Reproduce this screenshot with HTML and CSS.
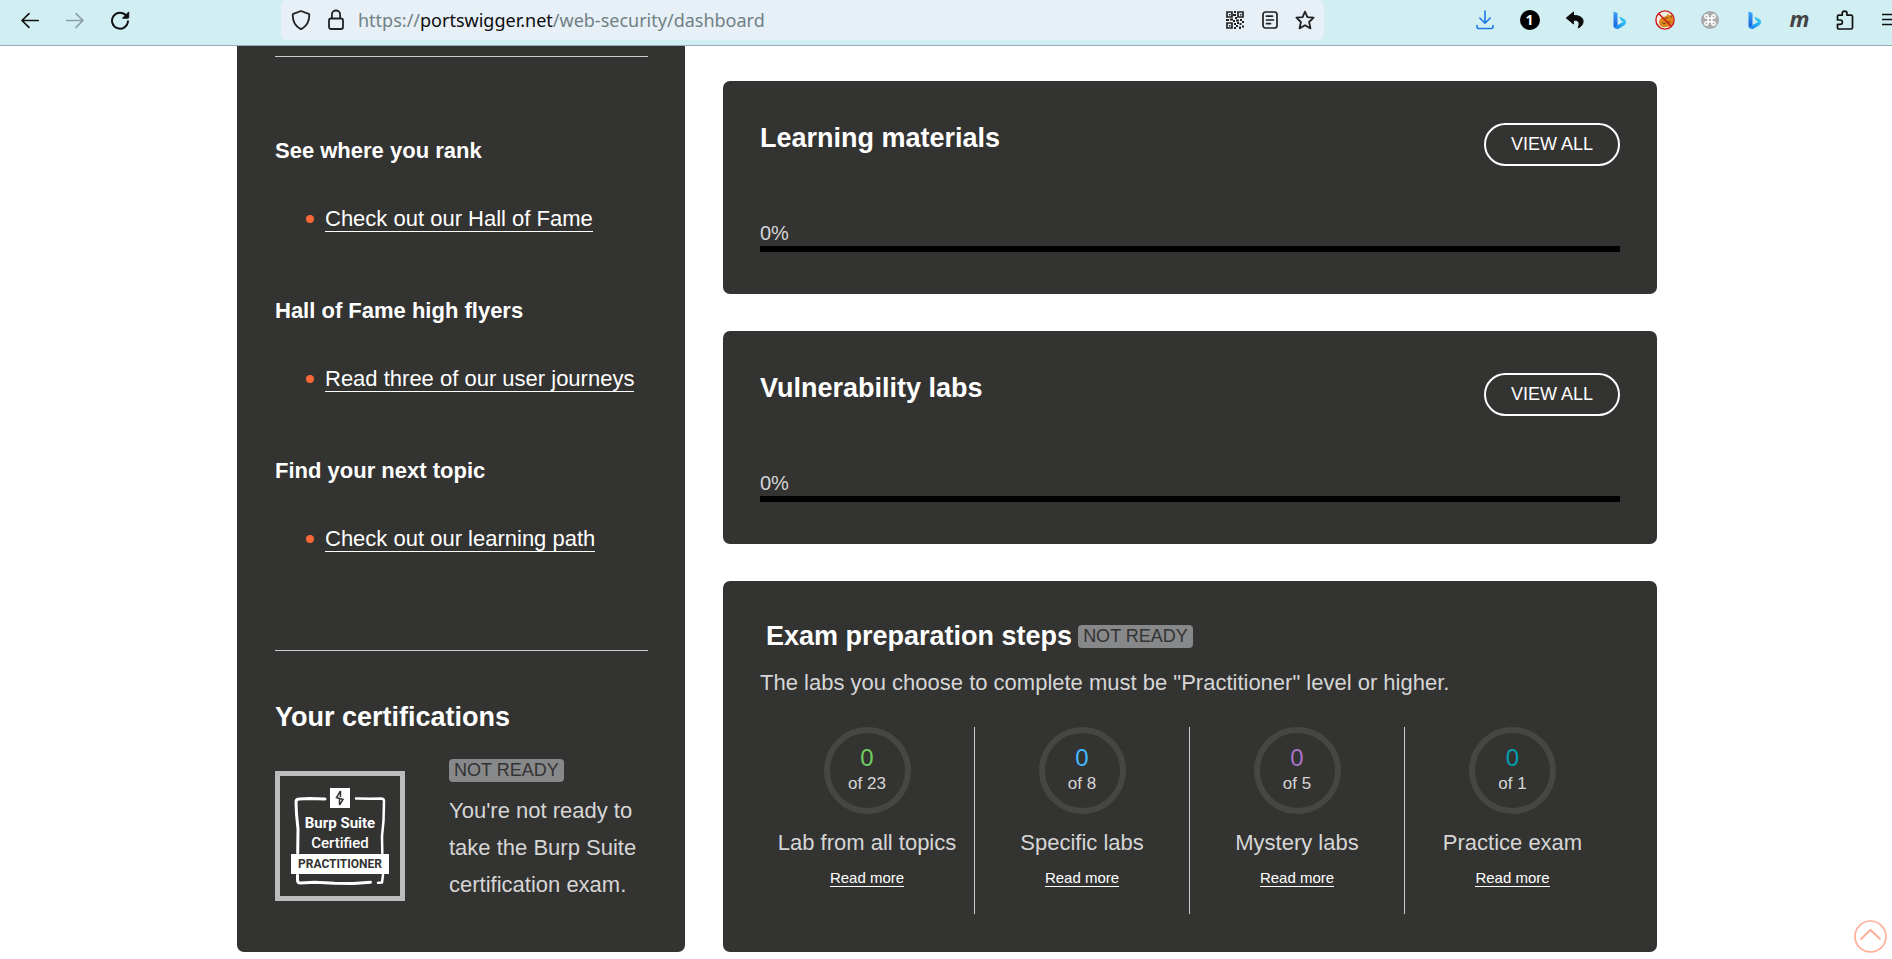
FILE: index.html
```html
<!DOCTYPE html>
<html lang="en">
<head>
<meta charset="utf-8">
<title>Dashboard | Web Security Academy</title>
<link rel="stylesheet" href="styles.css">
</head>
<body>
<svg class="defs" aria-hidden="true">
  <defs>
    <linearGradient id="bing-stem" x1="0" y1="0" x2="0" y2="1"><stop offset="0" stop-color="#3aa6f8"/><stop offset="1" stop-color="#1557dc"/></linearGradient>
    <linearGradient id="bing-leaf" x1="0" y1="1" x2="1" y2="0"><stop offset="0" stop-color="#1a7cf0"/><stop offset="1" stop-color="#35d8f5"/></linearGradient>
    <symbol id="bing" viewBox="0 0 20 20">
      <path d="M3.500 1.500l4 1.500v12.500l-2 3.200-2-2z" fill="url(#bing-stem)"/>
      <path d="M9.300 6.500l1.700 4 2.500 1.200L6 16l-2 .6 2.300 2.200c.7.400 1.500.400 2.300-.1l5.700-3.500c2.500-1.700 2.300-5-.2-6.300z" fill="url(#bing-leaf)"/>
    </symbol>
  </defs>
</svg>

<header class="toolbar">
  <nav class="nav-buttons" aria-label="Navigation">
    <button class="tool" type="button" aria-label="Back"><svg width="20" height="20" viewBox="0 0 20 20" fill="none" stroke="#111" stroke-width="1.700" stroke-linecap="round" stroke-linejoin="round"><path d="M18.200 10.500H2.200M9 3.700L2 10.500l7 6.800"/></svg></button>
    <button class="tool" type="button" aria-label="Forward" disabled><svg width="20" height="20" viewBox="0 0 20 20" fill="none" stroke="#8aa0a6" stroke-width="1.700" stroke-linecap="round" stroke-linejoin="round"><path d="M1.800 10.500h16M11 3.700l7 6.800-7 6.800"/></svg></button>
    <button class="tool" type="button" aria-label="Reload"><svg width="20" height="20" viewBox="0 0 20 20"><path d="M16.200 5.600A8 8 0 1 0 18 11.200" fill="none" stroke="#111" stroke-width="1.900" stroke-linecap="round"/><path d="M18.700 1.900v5.600c0 .4-.3.700-.7.700h-5.500z" fill="#111" stroke="#111" stroke-linejoin="round"/></svg></button>
  </nav>
  <div class="address">
    <button class="field-icon" type="button" aria-label="Tracking protection"><svg width="20" height="22" viewBox="0 0 20 22" fill="none" stroke="#222" stroke-width="1.800" stroke-linejoin="round"><path d="M10 2L2.300 4.900c-.4.200-.6.500-.6.900 0 6.300 2.800 11.500 7.700 14.100.4.200.8.200 1.200 0 4.900-2.600 7.700-7.800 7.700-14.100 0-.4-.2-.7-.6-.9z"/></svg></button>
    <button class="field-icon" type="button" aria-label="Connection secure"><svg width="20" height="22" viewBox="0 0 20 22" fill="none" stroke="#222" stroke-width="1.800"><rect x="3" y="9.500" width="14" height="10.500" rx="2"/><path d="M5.900 9.500V5.600a4.100 4.100 0 0 1 8.200 0v3.900"/></svg></button>
    <div class="url" role="textbox" aria-label="Address">https://<span class="url-host">portswigger.net</span>/web-security/dashboard</div>
    <div class="field-actions">
      <button class="field-icon" type="button" aria-label="QR code"><svg width="20" height="20" viewBox="0 0 20 20"><g fill="none" stroke="#222" stroke-width="1.700"><path d="M2 2h5v5H2zM13 2h5v5h-5zM2 13h5v5H2z"/></g><path fill="#222" d="M4 4h1.500v1.500H4zM15 4h1.500v1.500H15zM4 15h1.500v1.500H4zM9 1h2v2H9zM8 4h3v2H8zM10 7h2v2h-2zM1 9h3v2H1zM5 8.500h3v2H5zM8 10h2v2H8zM11 9.500h3v2h-3zM15 9h2v2h-2zM17 11h2v2h-2zM9 13h2v2H9zM12 12h2v2h-2zM14.500 13h2v2h-2zM11 15h2v2h-2zM17 15.500h2v2h-2zM14 16.500h2V19h-2zM9 17h2v2H9z"/></svg></button>
      <button class="field-icon" type="button" aria-label="Reader view"><svg width="20" height="20" viewBox="0 0 20 20" fill="none" stroke="#222" stroke-width="1.700" stroke-linecap="round"><rect x="3" y="2" width="14" height="16" rx="2.500"/><path d="M6.500 6.200h6M6.500 10h7M6.500 13.700h4"/></svg></button>
      <button class="field-icon" type="button" aria-label="Bookmark"><svg width="22" height="20" viewBox="0 0 22 20" fill="none" stroke="#222" stroke-width="1.800" stroke-linejoin="round"><path d="M11 1.600l2.400 5.500 6.200.6-4.500 4.300 1.400 6.400-5.500-3.200-5.500 3.200L6.900 12 2.400 7.700l6.200-.6z"/></svg></button>
    </div>
  </div>
  <div class="extensions">
    <button class="tool" type="button" aria-label="Downloads"><svg width="20" height="20" viewBox="0 0 20 20" fill="none" stroke="#1f7ae8" stroke-width="1.600" stroke-linecap="round" stroke-linejoin="round"><path d="M10 1v12M4.800 8l5.200 5.200L15.200 8M2 15.500V17c0 1 .7 1.500 1.500 1.500h13c.8 0 1.500-.5 1.500-1.500v-1.500"/></svg></button>
    <button class="tool" type="button" aria-label="1 notification"><span class="count">1</span></button>
    <button class="tool" type="button" aria-label="Undo"><svg width="20" height="20" viewBox="0 0 20 20"><path d="M8.500 2L1.300 8l7.200 6v-3.800c4.500-.2 7.200 1.700 4.600 7.800 3.400-1.500 5-4 5-6.600 0-3.900-3.500-5.900-9.600-5.900z" fill="#0c0c0c" stroke="#0c0c0c" stroke-linejoin="round"/></svg></button>
    <button class="tool" type="button" aria-label="Bing"><svg width="20" height="20"><use href="#bing"/></svg></button>
    <button class="tool" type="button" aria-label="Blocked"><svg width="20" height="20" viewBox="0 0 20 20"><circle cx="10" cy="10" r="9" fill="#f1eee6"/><path d="M4 11l2-3 3-1 3-1.500 1-2 1.500 2L17 4.500 18 8v5l-3 3.500-7 .8L4.500 15z" fill="#e0851b"/><path d="M7 13l4 .7M10 8.500l3-1M12.500 11.500l3 1M15 7l2-.5" stroke="#7a4a1a"/><circle cx="10" cy="10" r="9.100" fill="none" stroke="#cc1616" stroke-width="1.400"/><path d="M3.600 3.600l12.800 12.800" stroke="#cc1616" stroke-width="1.400"/></svg></button>
    <button class="tool" type="button" aria-label="Shortcuts"><svg width="20" height="20" viewBox="0 0 20 20"><circle cx="10" cy="10" r="9" fill="#ababab"/><path d="M8.200 8.200h3.600v3.600H8.200zM8.200 8.200H6.600a1.700 1.700 0 1 1 1.600-1.700zM11.800 8.200V6.500a1.700 1.700 0 1 1 1.700 1.700zM8.200 11.800v1.700a1.700 1.700 0 1 1-1.700-1.700zM11.800 11.800h1.700a1.700 1.700 0 1 1-1.700 1.700z" fill="none" stroke="#fff" stroke-width="1.500"/></svg></button>
    <button class="tool" type="button" aria-label="Bing chat"><svg width="20" height="20"><use href="#bing"/></svg></button>
    <button class="tool tool-m" type="button">m</button>
    <button class="tool" type="button" aria-label="Extensions"><svg width="20" height="20" viewBox="0 0 20 20" fill="none" stroke="#111" stroke-width="1.700" stroke-linejoin="round"><path d="M2.500 8V6.500c0-.8.500-1.300 1.300-1.300h3.400V3.500a2.400 2.400 0 0 1 4.800 0v1.700h4c.9 0 1.500.5 1.500 1.400v11c0 .9-.6 1.400-1.500 1.400H3.800c-.8 0-1.300-.5-1.300-1.300v-3.400h2.700a2.100 2.100 0 0 0 0-4.300H2.500z"/></svg></button>
    <button class="tool" type="button" aria-label="Menu"><svg width="20" height="20" viewBox="0 0 20 20" stroke="#111" stroke-width="1.500"><path d="M2 4.500h16M2 9.500h16M2 14.500h16"/></svg></button>
  </div>
</header>

<main class="page">
  <aside class="panel sidebar">
    <hr class="rule">
    <div class="topics">
      <section class="topic">
        <h3 class="topic-title">See where you rank</h3>
        <ul class="topic-list"><li class="topic-item"><a class="link" href="#hall-of-fame">Check out our Hall of Fame</a></li></ul>
      </section>
      <section class="topic">
        <h3 class="topic-title">Hall of Fame high flyers</h3>
        <ul class="topic-list"><li class="topic-item"><a class="link" href="#journeys">Read three of our user journeys</a></li></ul>
      </section>
      <section class="topic">
        <h3 class="topic-title">Find your next topic</h3>
        <ul class="topic-list"><li class="topic-item"><a class="link" href="#learning-path">Check out our learning path</a></li></ul>
      </section>
    </div>
    <hr class="rule">
    <section class="certs">
      <h2 class="title">Your certifications</h2>
      <div class="cert">
        <svg class="cert-badge" width="130" height="130" viewBox="0 0 130 130" role="img" aria-label="Burp Suite Certified Practitioner">
          <rect x="2.500" y="2.500" width="125" height="125" fill="none" stroke="#bbb" stroke-width="5"/>
          <g fill="none" stroke="#fff" stroke-linecap="round" stroke-linejoin="round">
            <path d="M50 28l-15-.5-11 .5c-2 0-3 1-3 3l.5 12L23 58l-.3 24" stroke-width="3"/>
            <path d="M81 27.500l14 .2 11-.3c2 0 3 .8 3 2.800l-.5 20L107 65l.3 17" stroke-width="2.500"/>
            <path d="M22.500 104v5c0 2 1 3 3 3l14-.7 20 1 19 .2 17-1.300" stroke-width="3"/>
            <path d="M108 104l-1 7.500-4 .3" stroke-width="2.500"/>
          </g>
          <path fill="#fff" d="M55 17h20v20H55zM16 83h98v20H16z"/>
          <path d="M65.500 20l-4 6.500 6.500 2L64.500 34M65.500 20v6M64.500 28v6" fill="none" stroke="#333332" stroke-width="1.500"/>
          <g font-family="Roboto, sans-serif" text-anchor="middle">
            <text x="65" y="57" font-size="15" font-weight="700" fill="#fff">Burp Suite</text>
            <text x="65" y="77" font-size="15" font-weight="500" fill="#fff">Certified</text>
            <text x="65" y="97" font-size="12" font-weight="700" fill="#333332">PRACTITIONER</text>
          </g>
        </svg>
        <div class="cert-text">
          <span class="tag">NOT READY</span>
          <p class="copy">You're not ready to take the Burp Suite certification exam.</p>
        </div>
      </div>
    </section>
  </aside>

  <div class="cards">
    <section class="panel card">
      <div class="card-head">
        <h2 class="title">Learning materials</h2>
        <a class="view-all" href="#materials">VIEW ALL</a>
      </div>
      <div class="progress-label" id="materials-label">0%</div>
      <div class="progress" role="progressbar" aria-labelledby="materials-label" aria-valuenow="0" aria-valuemin="0" aria-valuemax="100"></div>
    </section>
    <section class="panel card">
      <div class="card-head">
        <h2 class="title">Vulnerability labs</h2>
        <a class="view-all" href="#labs">VIEW ALL</a>
      </div>
      <div class="progress-label" id="labs-label">0%</div>
      <div class="progress" role="progressbar" aria-labelledby="labs-label" aria-valuenow="0" aria-valuemin="0" aria-valuemax="100"></div>
    </section>
    <section class="panel exam">
      <div class="exam-head">
        <h2 class="title">Exam preparation steps</h2>
        <span class="tag">NOT READY</span>
      </div>
      <p class="copy">The labs you choose to complete must be "Practitioner" level or higher.</p>
      <div class="steps">
        <div class="step">
          <div class="ring"><span class="ring-value green">0</span><span class="ring-total">of 23</span></div>
          <div class="copy">Lab from all topics</div>
          <div class="more"><a class="link" href="#all-topics">Read more</a></div>
        </div>
        <div class="step">
          <div class="ring"><span class="ring-value blue">0</span><span class="ring-total">of 8</span></div>
          <div class="copy">Specific labs</div>
          <div class="more"><a class="link" href="#specific">Read more</a></div>
        </div>
        <div class="step">
          <div class="ring"><span class="ring-value purple">0</span><span class="ring-total">of 5</span></div>
          <div class="copy">Mystery labs</div>
          <div class="more"><a class="link" href="#mystery">Read more</a></div>
        </div>
        <div class="step">
          <div class="ring"><span class="ring-value teal">0</span><span class="ring-total">of 1</span></div>
          <div class="copy">Practice exam</div>
          <div class="more"><a class="link" href="#practice">Read more</a></div>
        </div>
      </div>
    </section>
  </div>
</main>

<a class="to-top" href="#top" aria-label="Back to top"><svg width="33" height="33" viewBox="0 0 33 33" fill="none" stroke="#ffb09a" stroke-width="1.700"><circle cx="16.500" cy="16.500" r="15.500"/><path d="M6.500 19.500l10-9.500 10 9.500" stroke-width="2"/></svg></a>
</body>
</html>
```
FILE: styles.css
```css
* {
  box-sizing: border-box;
}

body {
  margin: 0;
  background: #fff;
  color: #d6d6d6;
  font-family: "Liberation Sans", Arial, sans-serif;
  font-size: 22px;
  line-height: 37px;
  overflow-x: hidden;
}

h2, h3, p, ul {
  margin: 0;
  padding: 0;
}

.defs {
  position: absolute;
  width: 0;
  height: 0;
}

/* Browser toolbar */
.toolbar {
  display: flex;
  align-items: flex-start;
  height: 46px;
  border-bottom: 1px solid #9aacb0;
  background: #d1eef2;
  overflow: hidden;
}

.nav-buttons {
  display: flex;
  flex: 0 0 281px;
  padding-left: 7px;
}

.tool,
.field-icon {
  display: flex;
  flex: none;
  align-items: center;
  justify-content: center;
  height: 40px;
  margin: 0;
  padding: 0;
  border: 0;
  background: none;
}

.tool {
  width: 45px;
}

.field-icon {
  width: 35px;
}

.address {
  display: flex;
  flex: 1;
  align-items: center;
  height: 40px;
  padding: 0 2px;
  border-radius: 6px;
  background: #e8f0f7;
}

.url {
  padding-left: 5px;
  color: #6f8084;
  font-family: "Noto Sans", sans-serif;
  font-size: 18px;
  line-height: 40px;
  white-space: nowrap;
}

.url-host {
  color: #0c0c0d;
}

.field-actions {
  display: flex;
  margin-left: auto;
}

.extensions {
  display: flex;
  flex: 0 0 568px;
  min-width: 0;
  padding-left: 138px;
}

.count {
  width: 20px;
  border-radius: 50%;
  background: #000;
  color: #fff;
  font-family: "Noto Sans", sans-serif;
  font-size: 14px;
  font-weight: 700;
  line-height: 20px;
  text-align: center;
}

.tool-m {
  padding-bottom: 4px;
  color: #444;
  font-family: "Open Sans", sans-serif;
  font-size: 22px;
  font-style: italic;
  font-weight: 700;
  line-height: 22px;
}

/* Page columns */
.page {
  display: grid;
  grid-template-columns: 448fr 934fr;
  gap: 38px;
  width: 100%;
  max-width: 1422px;
  margin: 0 auto;
  padding-left: 2px;
}

.panel {
  border-radius: 7px;
  background: #333332;
}

.title {
  color: #fff;
  font-size: 27px;
  line-height: 37px;
}

.copy {
  color: #d6d6d6;
}

.link {
  border-bottom: 1px solid #fff;
  color: #fff;
  text-decoration: none;
}

.tag {
  display: block;
  width: max-content;
  padding: 0 5px;
  border-radius: 4px;
  background: #87888a;
  color: #333332;
  font-size: 18px;
  line-height: 23px;
}

/* Sidebar */
.sidebar {
  padding: 10px 37px 49px 38px;
  border-top-left-radius: 0;
  border-top-right-radius: 0;
}

.rule {
  height: 1px;
  margin: 0;
  border: 0;
  background: #ccc;
}

.topics {
  display: grid;
  gap: 55px;
  padding: 75px 0 93px;
}

.topic {
  display: grid;
  gap: 31px;
}

.topic-title {
  color: #fff;
  font-size: 22px;
  line-height: 37px;
}

.topic-list {
  list-style: none;
}

.topic-item {
  display: flex;
  align-items: center;
  height: 37px;
  padding-left: 31px;
  white-space: nowrap;
}

.topic-item::before {
  width: 8px;
  height: 8px;
  margin-right: 11px;
  border-radius: 50%;
  background: #ff6633;
  content: "";
}

.topic-item .link {
  line-height: 25px;
}

.certs {
  padding-top: 48px;
}

.cert {
  display: flex;
  gap: 44px;
  padding-top: 23px;
}

.cert-badge {
  flex: none;
  margin-top: 12px;
}

.cert-text {
  display: grid;
  gap: 10px;
  align-content: start;
}

/* Cards */
.cards {
  display: flex;
  flex-direction: column;
  gap: 37px;
  padding-top: 35px;
}

.card {
  padding: 39px 37px 42px;
}

.card-head {
  display: flex;
  justify-content: space-between;
  padding-bottom: 54px;
}

.view-all {
  margin-top: 3px;
  padding: 0 25px;
  border: 2px solid #fff;
  border-radius: 22px;
  color: #fff;
  font-size: 18px;
  line-height: 39px;
  text-decoration: none;
}

.progress-label {
  font-size: 20px;
  line-height: 26px;
}

.progress {
  height: 6px;
  background: #000;
}

.exam {
  flex: 1;
  padding: 37px 37px 38px;
}

.exam-head {
  display: flex;
  align-items: center;
  gap: 6px;
  padding: 0 6px 9px;
}

.steps {
  display: grid;
  grid-template-columns: repeat(4, 1fr);
  padding-top: 26px;
}

.step {
  display: flex;
  flex-direction: column;
  align-items: center;
  padding-bottom: 25px;
  border-right: 1px solid #ccc;
}

.step:last-child {
  border-right: 0;
}

.ring {
  display: flex;
  flex-direction: column;
  align-items: center;
  justify-content: center;
  gap: 4px;
  width: 87px;
  height: 87px;
  margin-bottom: 10px;
  border: 6px solid #464644;
  border-radius: 50%;
}

.ring-value {
  font-size: 24px;
  line-height: 22px;
}

.ring-total {
  font-size: 17px;
  line-height: 22px;
}

.more {
  padding-top: 6px;
  font-size: 15px;
  line-height: 22px;
}

.green {
  color: #6fcf5f;
}

.blue {
  color: #42b8ff;
}

.purple {
  color: #a874c8;
}

.teal {
  color: #00a0b4;
}

.to-top {
  position: fixed;
  right: 5px;
  bottom: 6px;
  line-height: 0;
}
```
